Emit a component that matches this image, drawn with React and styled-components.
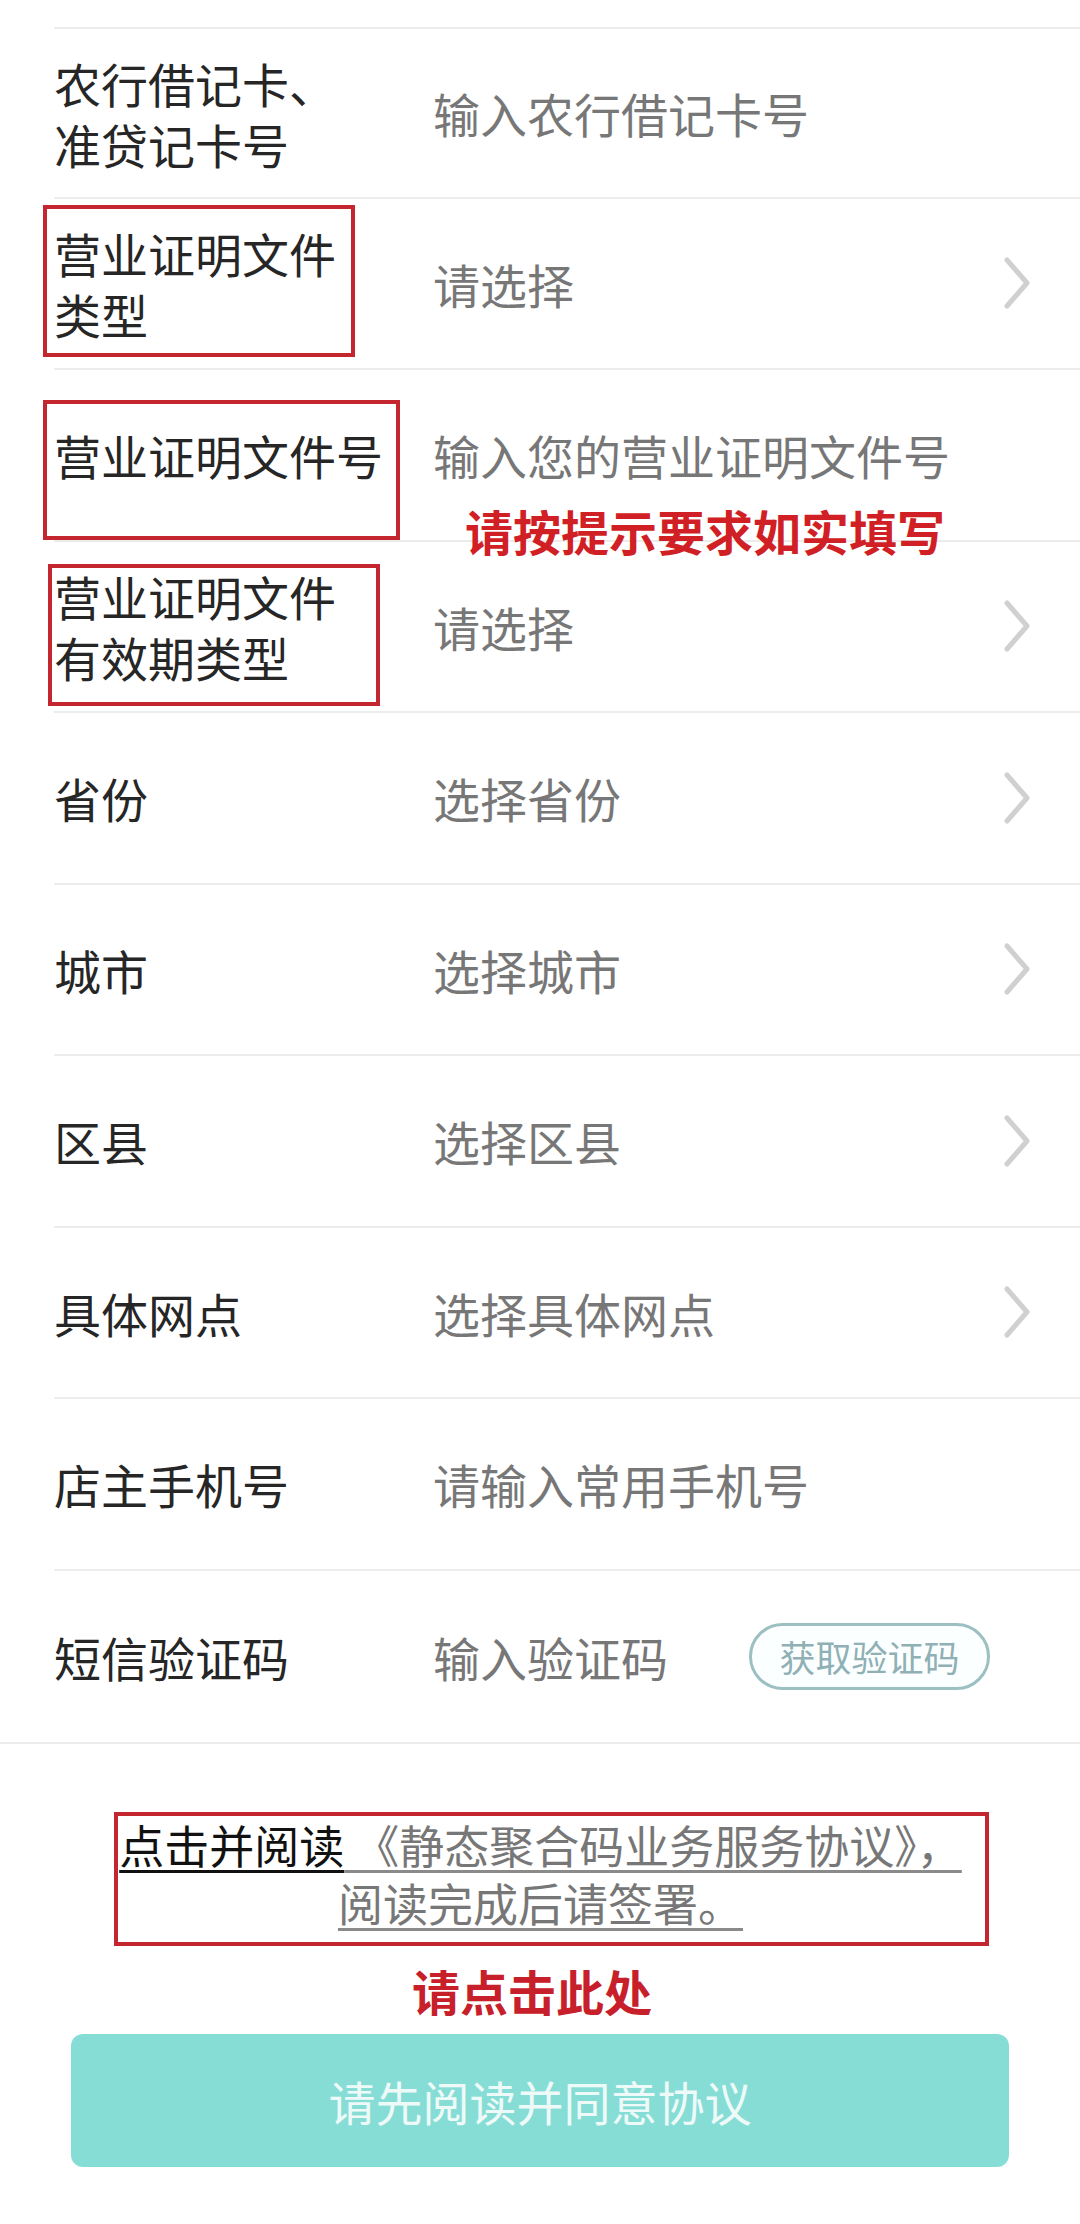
import React from 'react'
import styled, { createGlobalStyle } from 'styled-components'

const GlobalStyle = createGlobalStyle`
  html, body {
    margin: 0;
    padding: 0;
    background: #ffffff;
  }
  body {
    font-family: "Noto Sans CJK SC", "Noto Sans", sans-serif;
    -webkit-font-smoothing: antialiased;
  }
`

const Page = styled.div`
  width: 1080px;
  min-height: 2224px;
  padding-top: 27px;
  box-sizing: border-box;
  background: #fff;
`

const List = styled.div`
  padding-left: 54px;
  border-bottom: 2px solid #ececec;
`

const Row = styled.div`
  position: relative;
  display: flex;
  align-items: center;
  height: 171.5px;
  box-sizing: border-box;
  border-top: ${p => (p.$first ? '2px solid #ececec' : 'none')};
  border-bottom: ${p => (p.$last ? 'none' : '2px solid #ececec')};
`

const Label = styled.div`
  width: 379px;
  flex-shrink: 0;
  font-size: 47px;
  line-height: 61px;
  color: #262626;
`

const Value = styled.div`
  flex: 1;
  font-size: 47px;
  line-height: 61px;
  color: #777;
  white-space: nowrap;
`

const Chevron = styled.svg`
  width: 30px;
  height: 52px;
  margin-right: 48px;
  flex-shrink: 0;
`

const CodeButton = styled.div`
  margin-right: 90px;
  width: 241px;
  height: 67px;
  box-sizing: border-box;
  border: 3px solid #9cbfc2;
  border-radius: 34px;
  display: flex;
  align-items: center;
  justify-content: center;
  font-size: 36px;
  color: #8fb0b5;
  background: #fcffff;
`

const MarkBox = styled.div`
  position: absolute;
  left: ${p => p.$left}px;
  top: ${p => p.$top}px;
  width: ${p => p.$w}px;
  height: ${p => p.$h}px;
  box-sizing: border-box;
  border: 4px solid #c3262f;
  pointer-events: none;
`

const HintText = styled.div`
  position: absolute;
  left: 411px;
  top: 136px;
  font-size: 48px;
  line-height: 48px;
  font-weight: 700;
  color: #d11f26;
  white-space: nowrap;
  z-index: 2;
`

const AgreementBox = styled.div`
  margin: 68px 0 0 114px;
  width: 875px;
  box-sizing: border-box;
  border: 4px solid #c3262f;
  padding: 0 22px 10px 0;
  text-align: center;
  font-size: 45px;
  line-height: 58px;
  white-space: nowrap;
`

const LinkDark = styled.span`
  color: #111;
  text-decoration: underline;
  text-decoration-thickness: 3px;
  text-underline-offset: 6px;
`

const LinkGray = styled.span`
  color: #777;
  text-decoration: underline;
  text-decoration-color: #8a8a8a;
  text-decoration-thickness: 3px;
  text-underline-offset: 6px;
`

const ClickHint = styled.div`
  margin: 20px 0 0;
  text-align: center;
  font-size: 48px;
  line-height: 48px;
  font-weight: 700;
  color: #c8202a;
  padding-right: 16px;
`

const SubmitButton = styled.div`
  margin: 20px 0 0 71px;
  width: 938px;
  height: 133px;
  border-radius: 12px;
  background: #86ddd6;
  display: flex;
  align-items: center;
  justify-content: center;
  font-size: 47px;
  color: #eefaf8;
`

const Arrow = () => (
  <Chevron viewBox="0 0 30 52">
    <polyline points="5,3 25,26 5,49" fill="none" stroke="#d0d0d0" strokeWidth="5" strokeLinecap="round" strokeLinejoin="round" />
  </Chevron>
)

const rows = [
  { label: ['农行借记卡、', '准贷记卡号'], value: '输入农行借记卡号' },
  { label: ['营业证明文件', '类型'], value: '请选择', arrow: true, mark: { left: -11, top: 6, w: 312, h: 152 } },
  { label: ['营业证明文件号'], value: '输入您的营业证明文件号', mark: { left: -11, top: 30, w: 357, h: 140 }, hint: '请按提示要求如实填写' },
  { label: ['营业证明文件', '有效期类型'], value: '请选择', arrow: true, mark: { left: -6, top: 22, w: 332, h: 142 } },
  { label: ['省份'], value: '选择省份', arrow: true },
  { label: ['城市'], value: '选择城市', arrow: true },
  { label: ['区县'], value: '选择区县', arrow: true },
  { label: ['具体网点'], value: '选择具体网点', arrow: true },
  { label: ['店主手机号'], value: '请输入常用手机号' },
  { label: ['短信验证码'], value: '输入验证码', code: true },
]

export default function App() {
  return (
    <Page>
      <GlobalStyle />
      <List>
        {rows.map((r, i) => (
          <Row key={i} $first={i === 0} $last={i === rows.length - 1}>
            <Label>
              {r.label.map((l, j) => (
                <div key={j}>{l}</div>
              ))}
            </Label>
            <Value>{r.value}</Value>
            {r.arrow && <Arrow />}
            {r.code && <CodeButton>获取验证码</CodeButton>}
            {r.mark && <MarkBox $left={r.mark.left} $top={r.mark.top} $w={r.mark.w} $h={r.mark.h} />}
            {r.hint && <HintText>{r.hint}</HintText>}
          </Row>
        ))}
      </List>

      <AgreementBox>
        <LinkDark>点击并阅读</LinkDark>
        <LinkGray> 《静态聚合码业务服务协议》，</LinkGray>
        <br />
        <LinkGray>阅读完成后请签署。</LinkGray>
      </AgreementBox>
      <ClickHint>请点击此处</ClickHint>

      <SubmitButton>请先阅读并同意协议</SubmitButton>
    </Page>
  )
}
